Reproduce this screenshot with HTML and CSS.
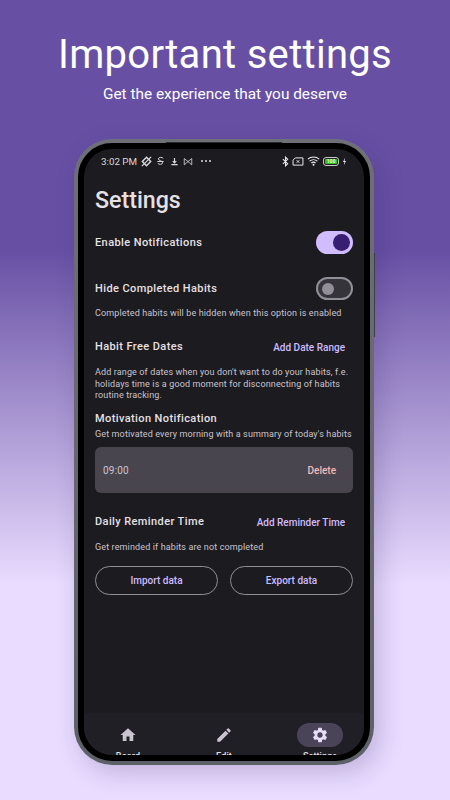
FILE: index.html
```html
<!DOCTYPE html>
<html lang="en">
<head>
    <meta charset="UTF-8">
    <meta name="viewport" content="width=device-width, initial-scale=1.0">
    <title>Important settings</title>
    <link rel="stylesheet" href="styles.css">
</head>
<body>
    <div class="page">
        <header class="promo">
            <h1>Important settings</h1>
            <p>Get the experience that you deserve</p>
        </header>

        <div class="phone">
            <span class="speaker"></span>
            <span class="side-button"></span>
            <div class="screen">
                <div class="status-bar">
                    <div class="status-left">
                        <span class="clock">3:02 PM</span>
                        <svg class="st-icon" viewBox="0 0 14 14" width="13" height="13"><path d="M7 2.500 11.500 7 7 11.500 2.500 7Z" fill="none" stroke="#d8d8da" stroke-width="1.600"/><path d="M2 12 12 2" stroke="#d8d8da" stroke-width="1.300"/></svg>
                        <svg class="st-icon st-s" viewBox="0 0 10 12" width="9" height="11"><path d="M8 2.500C7 1 3 1 2.600 3c-.3 2 4.800 2 4.800 4.400 0 2.200-4.400 2.200-5.400.6M1.500 6h7" fill="none" stroke="#d8d8da" stroke-width="1.100"/></svg>
                        <svg class="st-icon st-dl" viewBox="0 0 10 10" width="9" height="9"><path d="M5 1v5.500M3 4.500 5 6.500 7 4.500M1.500 8.500h7" fill="none" stroke="#d8d8da" stroke-width="1.300"/></svg>
                        <svg class="st-icon st-m" viewBox="0 0 12 10" width="10" height="9"><path d="M1.500 9V1.500L6 5l4.500-3.500V9M1.500 9 6 5l4.500 4" fill="none" stroke="#d8d8da" stroke-width="1"/></svg>
                        <span class="dots"><i></i><i></i><i></i></span>
                    </div>
                    <div class="status-right">
                        <svg viewBox="0 0 8 12" width="7" height="11"><path d="M1 3.200 6.500 8.500 4 11V1l2.500 2.500L1 8.800" fill="none" stroke="#ececee" stroke-width="1.200"/></svg>
                        <svg viewBox="0 0 13 10" width="12" height="9"><path d="M3.500 1H12v8H1V3.500Z" fill="none" stroke="#ececee" stroke-width="1.100"/><path d="M5 3.500 8 6.500M8 3.500 5 6.500" stroke="#ececee" stroke-width="1"/></svg>
                        <svg viewBox="0 0 13 10" width="13" height="10"><path d="M.8 3.200C4 .3 9 .3 12.200 3.200M2.600 5.100C4.800 3.200 8.200 3.200 10.400 5.100M4.400 7C5.600 6 7.400 6 8.600 7" fill="none" stroke="#ececee" stroke-width="1.100"/><circle cx="6.500" cy="8.700" r="1" fill="#ececee"/></svg>
                        <span class="battery"><span class="battery-fill">100</span></span>
                        <svg viewBox="0 0 5 9" width="5" height="9"><path d="M3.200 .5 1 5h1.500L1.800 8.500 4 4H2.500Z" fill="#ececee"/></svg>
                    </div>
                </div>

                <main class="settings">
                    <h2 class="title">Settings</h2>

                    <div class="row row-notify">
                        <span class="label">Enable Notifications</span>
                        <span class="switch on"><span class="knob"></span></span>
                    </div>

                    <div class="row row-hide">
                        <span class="label">Hide Completed Habits</span>
                        <span class="switch"><span class="knob"></span></span>
                    </div>
                    <p class="hint hint-hide">Completed habits will be hidden when this option is enabled</p>

                    <div class="row row-dates">
                        <span class="label">Habit Free Dates</span>
                        <span class="link">Add Date Range</span>
                    </div>
                    <p class="hint hint-dates">Add range of dates when you don't want to do your habits, f.e. holidays time is a good moment for disconnecting of habits routine tracking.</p>

                    <div class="label label-motivation">Motivation Notification</div>
                    <p class="hint">Get motivated every morning with a summary of today's habits</p>

                    <div class="time-card">
                        <span class="time">09:00</span>
                        <span class="delete">Delete</span>
                    </div>

                    <div class="row row-reminder">
                        <span class="label">Daily Reminder Time</span>
                        <span class="link">Add Reminder Time</span>
                    </div>
                    <p class="hint hint-reminder">Get reminded if habits are not completed</p>

                    <div class="data-buttons">
                        <span class="outline-button">Import data</span>
                        <span class="outline-button">Export data</span>
                    </div>
                </main>

                <nav class="bottom-nav">
                    <div class="nav-item">
                        <span class="nav-icon"><svg viewBox="0 0 24 24" width="18" height="18"><path d="M10 20v-6h4v6h5v-8h3L12 3 2 12h3v8z" fill="#cac4d0"/></svg></span>
                        <span class="nav-label">Board</span>
                    </div>
                    <div class="nav-item">
                        <span class="nav-icon"><svg viewBox="0 0 24 24" width="18" height="18"><path d="M3 17.250V21h3.750L17.810 9.940l-3.750-3.750L3 17.250zM20.710 7.040a1 1 0 0 0 0-1.410l-2.340-2.340a1 1 0 0 0-1.410 0l-1.830 1.830 3.750 3.750 1.830-1.830z" fill="#cac4d0"/></svg></span>
                        <span class="nav-label">Edit</span>
                    </div>
                    <div class="nav-item active">
                        <span class="nav-icon"><svg viewBox="0 0 24 24" width="18" height="18"><path d="M19.140 12.940c.04-.3.060-.61.060-.94 0-.32-.02-.64-.07-.94l2.030-1.580a.49.49 0 0 0 .12-.61l-1.920-3.320a.49.49 0 0 0-.59-.22l-2.390.96c-.5-.38-1.030-.7-1.620-.94l-.36-2.540a.48.48 0 0 0-.48-.41h-3.840a.48.48 0 0 0-.47.41l-.36 2.540c-.59.24-1.130.57-1.620.94l-2.390-.96a.49.49 0 0 0-.59.22L2.740 8.870a.48.48 0 0 0 .12.61l2.030 1.580c-.05.3-.09.63-.09.94s.02.64.07.94l-2.030 1.580a.49.49 0 0 0-.12.61l1.920 3.320c.12.22.37.29.59.22l2.390-.96c.5.38 1.030.7 1.620.94l.36 2.540c.05.24.24.41.48.41h3.840c.24 0 .44-.17.47-.41l.36-2.540c.59-.24 1.130-.56 1.620-.94l2.390.96c.22.08.47 0 .59-.22l1.920-3.320a.48.48 0 0 0-.12-.61l-2.010-1.580zM12 15.600A3.610 3.610 0 0 1 8.400 12c0-1.980 1.620-3.600 3.600-3.600s3.600 1.620 3.600 3.600-1.620 3.600-3.600 3.600z" fill="#e8def8"/></svg></span>
                        <span class="nav-label">Settings</span>
                    </div>
                </nav>
            </div>
        </div>
    </div>
</body>
</html>
```

FILE: styles.css
```css
* {
    margin: 0;
    padding: 0;
    box-sizing: border-box;
}

body, html {
    width: 100%;
    height: 100%;
    overflow: hidden;
    font-family: Roboto, "Liberation Sans", sans-serif;
}

.page {
    height: 800px;
    overflow: hidden;
    background: linear-gradient(180deg, #6750a4 0, #6750a4 250px, #e9dcff 585px, #e9dcff 100%);
}

.promo {
    height: 139px;
    padding-top: 29px;
    text-align: center;
    color: #fff;
}

.promo h1 {
    font-size: 40px;
    font-weight: 400;
    line-height: 52px;
    letter-spacing: 0.3px;
}

.promo p {
    font-size: 15.4px;
    line-height: 20px;
    margin-top: 3px;
}

.phone {
    position: relative;
    width: 300px;
    height: 626px;
    margin-left: 74px;
    padding: 4px;
    border-radius: 38px;
    background: linear-gradient(180deg, #6d7076, #5c6067);
    box-shadow: 6px 8px 24px rgba(50, 30, 100, 0.22);
}

.speaker {
    position: absolute;
    top: 3px;
    left: 92px;
    width: 116px;
    height: 2px;
    background-color: #2a2a2e;
}

.side-button {
    position: absolute;
    top: 114px;
    right: -1px;
    width: 1px;
    height: 84px;
    background-color: #3e4045;
}

.screen {
    position: relative;
    height: 618px;
    border: 6px solid #000;
    border-radius: 34px;
    background-color: #1c1b1f;
    overflow: hidden;
    display: flex;
    flex-direction: column;
}

.status-bar {
    height: 24px;
    padding: 0 17px;
    display: flex;
    justify-content: space-between;
    align-items: center;
    color: #d8d8da;
}

.status-left, .status-right {
    display: flex;
    align-items: center;
}

.status-right {
    gap: 3px;
}

.clock {
    font-size: 9.8px;
    margin-right: 3px;
}

.st-s {
    margin-left: 3px;
}

.st-dl {
    margin-left: 5px;
}

.st-m {
    margin-left: 4px;
}

.dots {
    display: flex;
    gap: 2px;
    margin-left: 8px;
}

.dots i {
    width: 2px;
    height: 2px;
    border-radius: 50%;
    background-color: #d8d8da;
}

.battery {
    width: 16px;
    height: 9px;
    padding: 1px;
    border: 1px solid #c8c8ca;
    border-radius: 3px;
    display: flex;
}

.battery-fill {
    flex: 1;
    overflow: hidden;
    background-color: #35c21c;
    border-radius: 1px;
    color: #e8ffe0;
    font-size: 5px;
    font-weight: 700;
    line-height: 5px;
    text-align: center;
}

.settings {
    flex: 1;
    padding: 0 11px;
    color: #e6e1e5;
}

.title {
    font-size: 23.2px;
    font-weight: 500;
    line-height: 30px;
    margin-top: 12px;
}

.row {
    display: flex;
    justify-content: space-between;
    align-items: center;
}

.label {
    font-size: 11px;
    font-weight: 500;
    letter-spacing: 0.4px;
    line-height: 16px;
}

.hint {
    font-size: 9px;
    line-height: 14px;
    letter-spacing: 0.13px;
    color: #cac4d0;
}

.link {
    font-size: 10px;
    font-weight: 500;
    color: #cfbcff;
    margin-right: 8px;
}

.switch {
    width: 37px;
    height: 23px;
    border-radius: 12px;
    border: 2px solid #938f99;
    background-color: #36343b;
    display: flex;
    align-items: center;
    padding-left: 4px;
}

.knob {
    width: 12px;
    height: 12px;
    border-radius: 50%;
    background-color: #938f99;
}

.switch.on {
    border: none;
    background-color: #d0bcff;
    justify-content: flex-end;
    padding: 0 3px 0 0;
}

.switch.on .knob {
    width: 17px;
    height: 17px;
    background-color: #381e72;
}

.row-notify {
    margin-top: 16px;
}

.row-hide {
    margin-top: 23px;
}

.hint-hide {
    margin-top: 6px;
}

.row-dates {
    margin-top: 19px;
}

.hint-dates {
    margin-top: 12px;
    line-height: 11.5px;
}

.label-motivation {
    margin-top: 9.5px;
}

.time-card {
    height: 46px;
    margin-top: 6px;
    padding: 0 17px 0 8px;
    border-radius: 6px;
    background-color: #49454f;
    display: flex;
    justify-content: space-between;
    align-items: center;
}

.time {
    font-size: 10px;
    letter-spacing: 0.2px;
    color: #cac4d0;
}

.delete {
    font-size: 10px;
    font-weight: 500;
    color: #f2b8b5;
}

.row-reminder {
    margin-top: 21px;
}

.hint-reminder {
    margin-top: 10px;
}

.data-buttons {
    display: flex;
    gap: 12px;
    margin-top: 12px;
}

.outline-button {
    flex: 1;
    height: 29px;
    border: 1px solid #938f99;
    border-radius: 15px;
    font-size: 10px;
    font-weight: 500;
    color: #d0bcff;
    display: flex;
    justify-content: center;
    align-items: center;
}

.bottom-nav {
    height: 42px;
    background-color: #211f26;
    display: flex;
    justify-content: space-between;
    overflow: hidden;
    padding: 10px 21px 0;
}

.nav-item {
    width: 46px;
    display: flex;
    flex-direction: column;
    align-items: center;
}

.nav-icon {
    width: 46px;
    height: 24px;
    border-radius: 12px;
    display: flex;
    justify-content: center;
    align-items: center;
    flex-shrink: 0;
}

.nav-item.active .nav-icon {
    background-color: #4a4458;
}

.nav-label {
    font-size: 9px;
    font-weight: 500;
    letter-spacing: 0.1px;
    line-height: 14px;
    margin-top: 2px;
    color: #e6e1e5;
}
```
